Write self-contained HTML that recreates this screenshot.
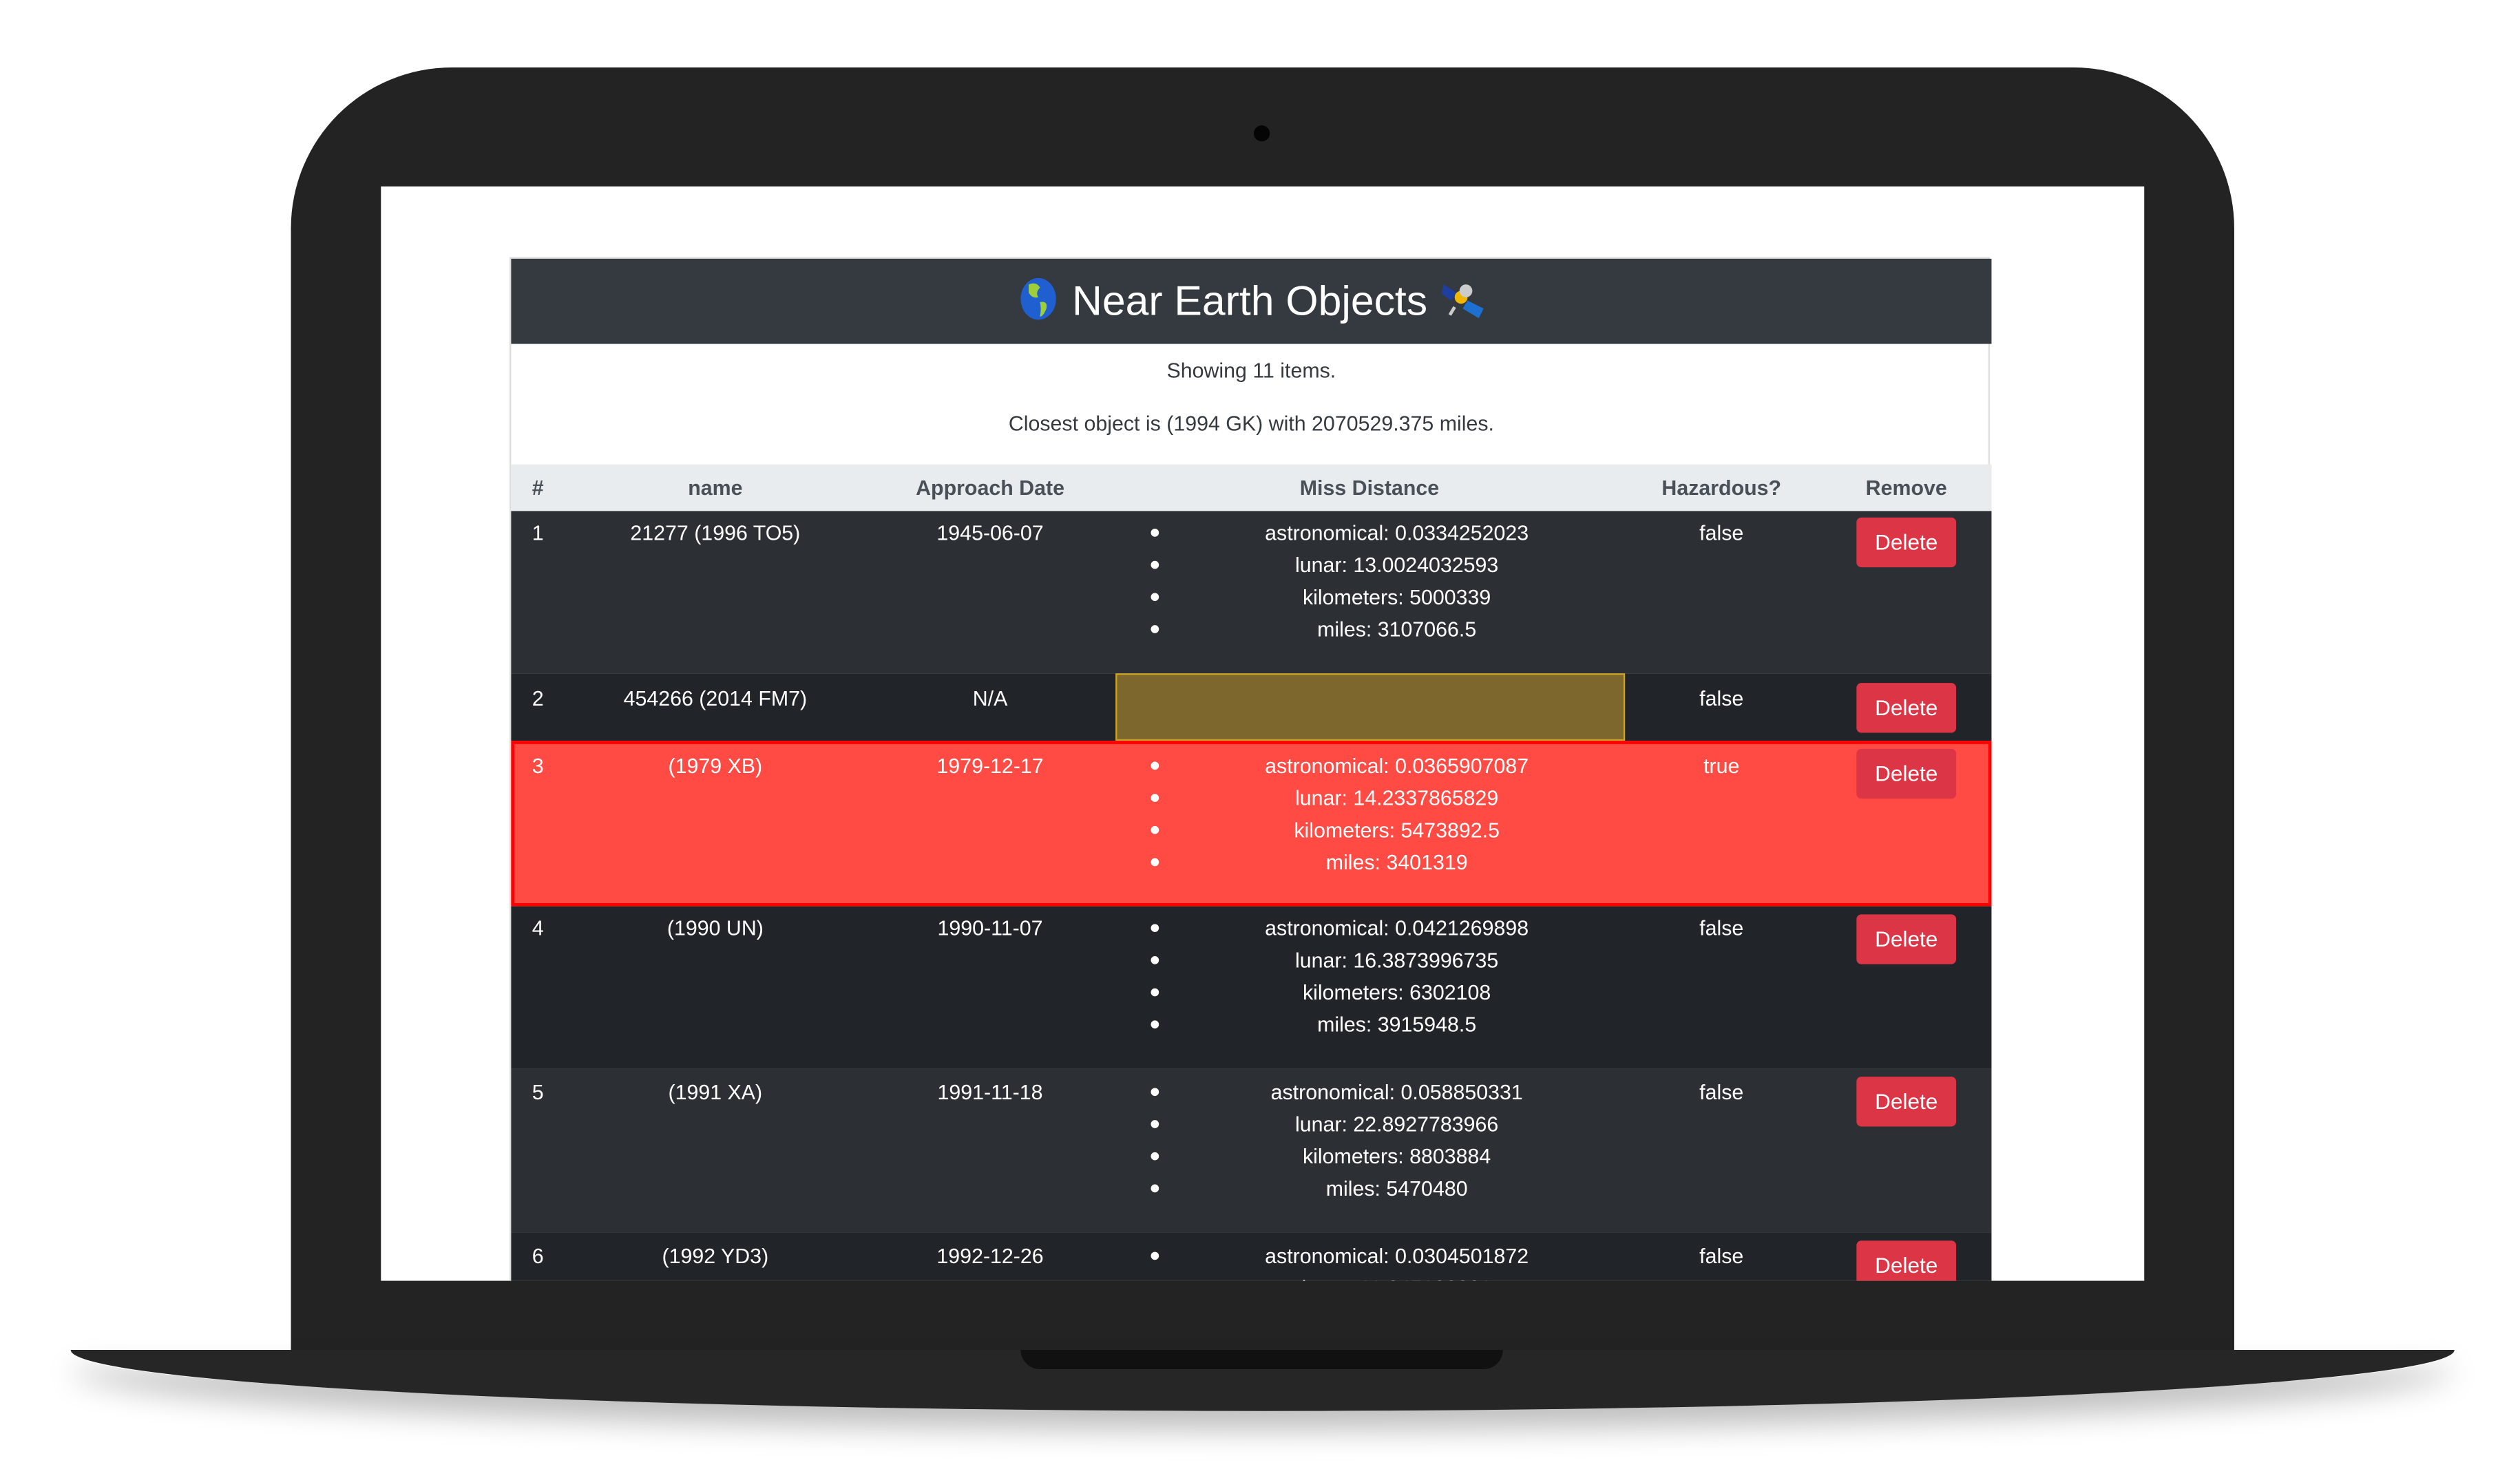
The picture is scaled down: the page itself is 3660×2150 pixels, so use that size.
<!DOCTYPE html>
<html><head><meta charset="utf-8"><style>
html,body{margin:0;padding:0;background:#fff;width:3660px;height:2150px;overflow:hidden}
#w{position:absolute;left:0;top:0;width:1560px;height:920px;transform:scale(2.3345);transform-origin:0 0;font-family:"Liberation Sans",sans-serif}
.abs{position:absolute}
#body{left:181px;top:42px;width:1209px;height:800px;background:#232323;border-radius:100px 100px 0 0}
#base{left:44px;top:840px;width:1483px;height:38px;background:#262626;border-radius:0 0 50% 50%/0 0 100% 100%;box-shadow:0 12px 18px rgba(0,0,0,.25)}
#notch{left:635px;top:840px;width:300px;height:12px;background:#111;border-radius:0 0 14px 14px}
#cam{left:780px;top:78px;width:10px;height:10px;border-radius:50%;background:#050505}
#screen{left:237px;top:116px;width:1097px;height:681px;background:#fff;overflow:hidden}
#card{left:80px;top:44px;width:921px;height:700px;border:1px solid #ddd;box-sizing:border-box}
#hdr{left:0;top:0;width:921px;height:53px;background:#343a40;color:#fff;font-size:26px;text-align:center;line-height:53px}
.c{color:#343a40;font-size:13px;text-align:center;width:921px;left:0}
#th{left:0;top:128px;width:921px;height:29px;background:#e9ecef;color:#495057;font-weight:bold;font-size:13px}
.row{left:0;width:921px;color:#fff;font-size:13px}
.t{position:absolute;text-align:center;white-space:nowrap}
.btn{position:absolute;left:837px;width:62px;height:31px;background:#dc3545;border-radius:3px;color:#fff;font-size:13.5px;text-align:center;line-height:31px}
.dot{position:absolute;left:398px;width:5px;height:5px;border-radius:50%;background:#fff}
</style></head><body><div id="w">
<div class="abs" id="body"></div>
<div class="abs" id="base"></div>
<div class="abs" id="notch"></div>
<div class="abs" id="cam"></div>
<div class="abs" id="screen">
<div class="abs" id="card">
<div class="abs" id="hdr"><svg width="26" height="28" viewBox="0 0 26 28" style="vertical-align:-4px;margin-right:8px"><ellipse cx="13" cy="14" rx="11" ry="13" fill="#1f5fd0"/><path d="M7 5 Q12 3 14 7 Q11 10 13 13 Q9 14 7 10Z M14 16 Q19 15 18 20 Q16 25 14 25 Q15 20 14 16Z" fill="#9ccf3a"/></svg>Near Earth Objects<svg width="28" height="26" viewBox="0 0 28 26" style="vertical-align:-3px;margin-left:8px"><path d="M2 4 L10 9 L7 14 L1 10Z" fill="#1d3fa0"/><path d="M17 14 L27 19 L24 25 L14 19Z" fill="#1d6fd0"/><circle cx="13" cy="12" r="4" fill="#f0b800"/><circle cx="16" cy="8" r="4" fill="#ccc"/><path d="M9 18 L6 23" stroke="#ccc" stroke-width="2"/></svg></div>
<div class="abs c" style="top:62px">Showing 11 items.</div>
<div class="abs c" style="top:95px">Closest object is (1994 GK) with 2070529.375 miles.</div>
<div class="abs" id="th">
<span class="t" style="left:13px;top:7px">#</span>
<span class="t" style="left:77px;width:100px;top:7px">name</span>
<span class="t" style="left:223px;width:150px;top:7px">Approach Date</span>
<span class="t" style="left:434px;width:200px;top:7px">Miss Distance</span>
<span class="t" style="left:703px;width:100px;top:7px">Hazardous?</span>
<span class="t" style="left:818px;width:100px;top:7px">Remove</span>
</div>

<div class="abs row" style="top:157px;height:101px;background:#2c3034">
<span class="t" style="left:13px;top:6px">1</span>
<span class="t" style="left:27px;width:200px;top:6px">21277 (1996 TO5)</span>
<span class="t" style="left:223px;width:150px;top:6px">1945-06-07</span>
<div class="dot" style="top:11px"></div><div class="dot" style="top:31px"></div><div class="dot" style="top:51px"></div><div class="dot" style="top:71px"></div>
<span class="t" style="left:451px;width:200px;top:6px">astronomical: 0.0334252023</span>
<span class="t" style="left:451px;width:200px;top:26px">lunar: 13.0024032593</span>
<span class="t" style="left:451px;width:200px;top:46px">kilometers: 5000339</span>
<span class="t" style="left:451px;width:200px;top:66px">miles: 3107066.5</span>
<span class="t" style="left:703px;width:100px;top:6px">false</span>
<div class="btn" style="top:4px">Delete</div>
</div>

<div class="abs row" style="top:258px;height:42px;background:#212529">
<span class="t" style="left:13px;top:8px">2</span>
<span class="t" style="left:27px;width:200px;top:8px">454266 (2014 FM7)</span>
<span class="t" style="left:223px;width:150px;top:8px">N/A</span>
<div class="abs" style="left:376px;top:0;width:317px;height:42px;background:#7d672d;border:1px solid #c9a227;box-sizing:border-box"></div>
<span class="t" style="left:703px;width:100px;top:8px">false</span>
<div class="btn" style="top:6px">Delete</div>
</div>

<div class="abs row" style="top:300px;height:103px;background:#ff4b44;border:2px solid #f00;box-sizing:border-box;left:0">
<span class="t" style="left:11px;top:6px">3</span>
<span class="t" style="left:25px;width:200px;top:6px">(1979 XB)</span>
<span class="t" style="left:221px;width:150px;top:6px">1979-12-17</span>
<div class="dot" style="top:11px;left:396px"></div><div class="dot" style="top:31px;left:396px"></div><div class="dot" style="top:51px;left:396px"></div><div class="dot" style="top:71px;left:396px"></div>
<span class="t" style="left:449px;width:200px;top:6px">astronomical: 0.0365907087</span>
<span class="t" style="left:449px;width:200px;top:26px">lunar: 14.2337865829</span>
<span class="t" style="left:449px;width:200px;top:46px">kilometers: 5473892.5</span>
<span class="t" style="left:449px;width:200px;top:66px">miles: 3401319</span>
<span class="t" style="left:701px;width:100px;top:6px">true</span>
<div class="btn" style="top:3px;left:835px">Delete</div>
</div>

<div class="abs row" style="top:403px;height:101px;background:#212529">
<span class="t" style="left:13px;top:6px">4</span>
<span class="t" style="left:27px;width:200px;top:6px">(1990 UN)</span>
<span class="t" style="left:223px;width:150px;top:6px">1990-11-07</span>
<div class="dot" style="top:11px"></div><div class="dot" style="top:31px"></div><div class="dot" style="top:51px"></div><div class="dot" style="top:71px"></div>
<span class="t" style="left:451px;width:200px;top:6px">astronomical: 0.0421269898</span>
<span class="t" style="left:451px;width:200px;top:26px">lunar: 16.3873996735</span>
<span class="t" style="left:451px;width:200px;top:46px">kilometers: 6302108</span>
<span class="t" style="left:451px;width:200px;top:66px">miles: 3915948.5</span>
<span class="t" style="left:703px;width:100px;top:6px">false</span>
<div class="btn" style="top:5px">Delete</div>
</div>

<div class="abs row" style="top:504px;height:102px;background:#2c3034">
<span class="t" style="left:13px;top:7px">5</span>
<span class="t" style="left:27px;width:200px;top:7px">(1991 XA)</span>
<span class="t" style="left:223px;width:150px;top:7px">1991-11-18</span>
<div class="dot" style="top:12px"></div><div class="dot" style="top:32px"></div><div class="dot" style="top:52px"></div><div class="dot" style="top:72px"></div>
<span class="t" style="left:451px;width:200px;top:7px">astronomical: 0.058850331</span>
<span class="t" style="left:451px;width:200px;top:27px">lunar: 22.8927783966</span>
<span class="t" style="left:451px;width:200px;top:47px">kilometers: 8803884</span>
<span class="t" style="left:451px;width:200px;top:67px">miles: 5470480</span>
<span class="t" style="left:703px;width:100px;top:7px">false</span>
<div class="btn" style="top:5px">Delete</div>
</div>

<div class="abs row" style="top:606px;height:101px;background:#212529">
<span class="t" style="left:13px;top:7px">6</span>
<span class="t" style="left:27px;width:200px;top:7px">(1992 YD3)</span>
<span class="t" style="left:223px;width:150px;top:7px">1992-12-26</span>
<div class="dot" style="top:12px"></div><div class="dot" style="top:32px"></div>
<span class="t" style="left:451px;width:200px;top:7px">astronomical: 0.0304501872</span>
<span class="t" style="left:451px;width:200px;top:27px">lunar: 11.845102301</span>
<span class="t" style="left:703px;width:100px;top:7px">false</span>
<div class="btn" style="top:5px">Delete</div>
</div>
</div>
</div>
</div></body></html>
